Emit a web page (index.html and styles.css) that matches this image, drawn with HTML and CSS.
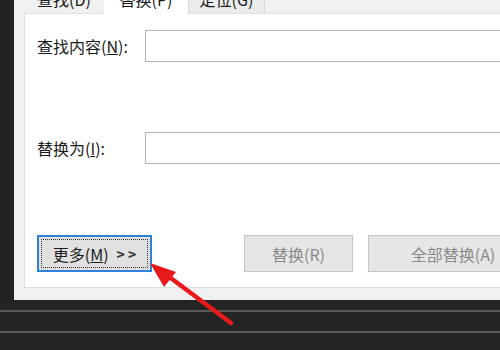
FILE: index.html
```html
<!DOCTYPE html>
<html lang="zh">
<head>
<meta charset="utf-8">
<link rel="stylesheet" href="styles.css">
</head>
<body>
<div class="screen">
  <div class="top">
    <div class="strip"></div>
    <div class="dialog">
      <div class="tabs">
        <div class="tab">查找(D)</div>
        <div class="tab active">替换(P)</div>
        <div class="tab">定位(G)</div>
      </div>
      <div class="panel">
        <div class="row">
          <label class="label">查找内容(<u>N</u>):</label>
          <div class="input"></div>
        </div>
        <div class="row row2">
          <label class="label">替换为(<u>I</u>):</label>
          <div class="input"></div>
        </div>
        <div class="buttons">
          <div class="btn focus"><span class="focus-ring">更多(<u>M</u>)<span class="chev">&gt; &gt;</span></span></div>
          <div class="btn disabled b2">替换(R)</div>
          <div class="btn disabled b3">全部替换(A)</div>
        </div>
      </div>
    </div>
  </div>
  <div class="bottom">
    <div class="line"></div>
    <div class="line"></div>
  </div>
</div>
<svg class="arrow" width="500" height="350" viewBox="0 0 500 350">
  <line x1="231" y1="323" x2="160" y2="270" stroke="#e8191b" stroke-width="4.5" stroke-linecap="round"/>
  <polygon points="150,263 176,272 164,287" fill="#e8191b"/>
</svg>
</body>
</html>
```
FILE: styles.css
```css
html, body {
  margin: 0;
  padding: 0;
}
body {
  width: 500px;
  height: 350px;
  overflow: hidden;
  background: #242424;
  font-family: "Noto Sans CJK SC", "Noto Sans", sans-serif;
  font-size: 16px;
  color: #1a1a1a;
  position: relative;
}
.screen {
  display: flex;
  flex-direction: column;
  height: 350px;
}
.top {
  display: flex;
  height: 300px;
}
.strip {
  width: 14px;
  background: #222222;
  flex: none;
}
.dialog {
  flex: 1;
  background: #f0f0f0;
  padding: 0 0 12px 10px;
  display: flex;
  flex-direction: column;
  min-width: 0;
}
.tabs {
  display: flex;
  height: 30px;
  margin-top: -16px;
  flex: none;
  border-bottom: 1px solid #e0e0e0;
  box-sizing: border-box;
}
.tab {
  width: 80px;
  display: flex;
  align-items: center;
  justify-content: center;
  line-height: 1;
  color: #1a1a1a;
  background: #f0f0f0;
  box-sizing: border-box;
}
.tab:nth-child(3) {
  width: 77px;
  background: #ebebeb;
  border-left: 1px solid #d9d9d9;
  border-right: 1px solid #d9d9d9;
}
.tab.active {
  width: 84px;
  background: #ffffff;
  margin-bottom: -1px;
}
.panel {
  flex: 1;
  width: 500px;
  background: #ffffff;
  border: 1px solid #dddddd;
  border-top: none;
  padding: 16px 0 15px 12px;
  box-sizing: border-box;
  display: flex;
  flex-direction: column;
}
.row {
  display: flex;
  align-items: center;
  height: 32px;
}
.row2 {
  margin-top: 70px;
}
.label {
  width: 108px;
  flex: none;
  white-space: nowrap;
}
.input {
  flex: 1;
  height: 32px;
  border: 1px solid #b4b4b4;
  box-sizing: border-box;
  background: #fff;
}
.buttons {
  display: flex;
  margin-top: 71px;
  height: 37px;
}
.btn {
  box-sizing: border-box;
  height: 37px;
  display: flex;
  align-items: center;
  justify-content: center;
  background: #e1e1e1;
  border: 1px solid #c2c2c2;
  white-space: nowrap;
  flex: none;
}
.btn.focus {
  width: 115px;
  border: 2px solid #2f80d6;
  padding: 2px;
}
.focus-ring {
  flex: 1;
  align-self: stretch;
  display: flex;
  align-items: center;
  justify-content: center;
  border: 1px dotted #333;
  background: #e1e1e1;
}
.chev {
  margin-left: 8px;
  font-weight: bold;
  font-size: 14px;
  color: #333;
}
.btn.disabled {
  color: #8a8a8a;
  background: #e6e6e6;
  border-color: #c6c6c6;
}
.b2 {
  width: 109px;
  margin-left: 92px;
}
.b3 {
  width: 170px;
  margin-left: 15px;
}
.bottom {
  flex: 1;
  background: #242424;
  padding-top: 10px;
  display: flex;
  flex-direction: column;
}
.line {
  height: 2px;
  background: #5a5a5a;
}
.line + .line {
  margin-top: 19px;
}
.arrow {
  position: absolute;
  left: 0;
  top: 0;
}
```
